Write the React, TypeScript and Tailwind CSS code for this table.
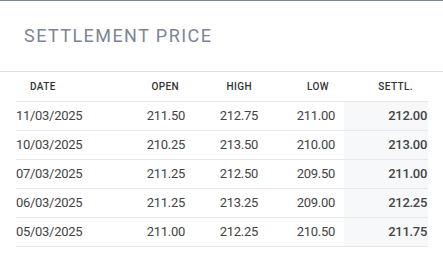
const rows = [
    { date: '11/03/2025', open: '211.50', high: '212.75', low: '211.00', settl: '212.00' },
    { date: '10/03/2025', open: '210.25', high: '213.50', low: '210.00', settl: '213.00' },
    { date: '07/03/2025', open: '211.25', high: '212.50', low: '209.50', settl: '211.00' },
    { date: '06/03/2025', open: '211.25', high: '213.25', low: '209.00', settl: '212.25' },
    { date: '05/03/2025', open: '211.00', high: '212.25', low: '210.50', settl: '211.75' },
]

export default function App() {
    return (
        <main className="h-[262px] w-[443px] overflow-hidden border-t border-[#7b8794] bg-white font-['Roboto',sans-serif]">
            {/* Title */}
            <h2 className="px-6 pt-[23px] pb-[24px] text-[18px] leading-[23px] font-normal tracking-[0.08em] text-[#7c8594]">
                SETTLEMENT PRICE
            </h2>

            <div className="border-t border-[#dedede]">
                <table className="ml-4 w-[412px] table-fixed border-collapse">
                    <colgroup>
                        <col className="w-[110px]" />
                        <col className="w-[68px]" />
                        <col className="w-[73px]" />
                        <col className="w-[77px]" />
                        <col className="w-[84px]" />
                    </colgroup>
                    <thead>
                        <tr className="h-[29px] border-b border-[#e6e6e6] text-[10px] tracking-[0.04em] text-[#333]">
                            <th className="px-[14px] text-left font-medium">DATE</th>
                            <th className="pr-[15px] text-right font-medium">OPEN</th>
                            <th className="pr-[15px] text-right font-medium">HIGH</th>
                            <th className="pr-[15px] text-right font-medium">LOW</th>
                            <th className="pr-[15px] text-right font-medium">SETTL.</th>
                        </tr>
                    </thead>
                    <tbody className="text-[13px] tracking-[-0.3px] text-[#444]">
                        {rows.map((r) => (
                            <tr key={r.date} className="h-[29px] border-b border-[#e8e8e8]">
                                <td className="text-left">{r.date}</td>
                                <td className="pr-[9px] text-right">{r.open}</td>
                                <td className="pr-[9px] text-right">{r.high}</td>
                                <td className="pr-[9px] text-right">{r.low}</td>
                                <td className="bg-[#f7f8fa] pr-px text-right font-medium">{r.settl}</td>
                            </tr>
                        ))}
                    </tbody>
                </table>
            </div>
        </main>
    )
}
